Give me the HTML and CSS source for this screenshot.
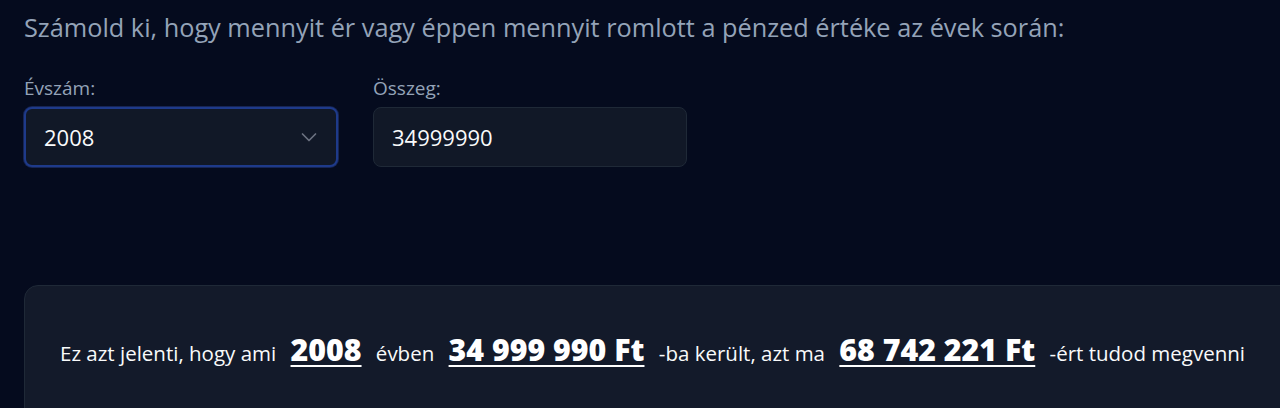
FILE: index.html
```html
<!DOCTYPE html>
<html lang="hu">
<head>
    <meta charset="UTF-8">
    <meta name="viewport" content="width=device-width, initial-scale=1.0">
    <title>Inflációs kalkulátor</title>
    <link rel="stylesheet" href="styles.css">
</head>
<body>

    <div class="calc">
        <p class="intro">Számold ki, hogy mennyit ér vagy éppen mennyit romlott a pénzed értéke az évek során:</p>

        <form class="calc-form">
            <div class="field">
                <label for="year">Évszám:</label>
                <div class="select-wrap">
                    <select id="year" class="control select">
                        <option>2008</option>
                    </select>
                    <svg class="chevron" width="18" height="18" viewBox="0 0 18 18" fill="none">
                        <path d="M2.5 6 L9 12.5 L15.5 6" stroke="#6b7280" stroke-width="1.7" stroke-linecap="round" stroke-linejoin="round"/>
                    </svg>
                </div>
            </div>
            <div class="field">
                <label for="amount">Összeg:</label>
                <input id="amount" class="control" type="text" value="34999990">
            </div>
        </form>

        <!-- Result -->
        <div class="result">
            <p class="result-text">
                Ez azt jelenti, hogy ami <b>2008</b> évben <b>34 999 990 Ft</b> -ba került, azt ma <b>68 742 221 Ft</b> -ért tudod megvenni
            </p>
        </div>
    </div>

</body>
</html>
```

FILE: styles.css
```css
* {
    margin: 0;
    padding: 0;
    box-sizing: border-box;
}

html, body {
    overflow: hidden;
}

body {
    background: #050b1e;
    font-family: 'Open Sans', sans-serif;
    color: #f3f4f6;
}

.calc {
    padding: 10px 0 0 24px;
}

.intro {
    font-size: 25.3px;
    color: #94a3b8;
    line-height: 34px;
    white-space: nowrap;
}

.calc-form {
    display: flex;
    gap: 35px;
    margin-top: 32px;
}

.field {
    display: flex;
    flex-direction: column;
    width: 314px;
}

.field label {
    font-size: 19px;
    color: #94a3b8;
    line-height: 24px;
    margin-bottom: 7px;
}

.select-wrap {
    position: relative;
}

.control {
    width: 100%;
    height: 60px;
    padding: 0 18px;
    background: #111827;
    border: 1px solid #1f2937;
    border-radius: 8px;
    font-family: inherit;
    font-size: 22px;
    color: #f9fafb;
    outline: none;
}

.select {
    appearance: none;
    border: 2px solid #1e3a8a;
    box-shadow: 0 0 0 1px #172554;
}

.chevron {
    position: absolute;
    right: 20px;
    top: 21px;
    pointer-events: none;
}

.result {
    margin-top: 118px;
    width: 1300px;
    height: 140px;
    background: #131a2a;
    border: 1px solid #1f2937;
    border-radius: 14px;
    padding: 44px 0 0 35px;
}

.result-text {
    font-size: 20.5px;
    line-height: 40px;
    font-weight: 500;
    color: #f9fafb;
    white-space: nowrap;
}

.result-text b {
    font-size: 30.3px;
    font-weight: 800;
    color: #ffffff;
    text-decoration: underline;
    text-decoration-thickness: 2px;
    text-underline-offset: 4px;
    margin: 0 9px;
}
```
